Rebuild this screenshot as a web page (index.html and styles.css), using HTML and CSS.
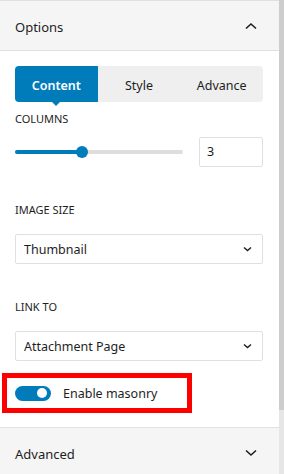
FILE: index.html
```html
<!DOCTYPE html>
<html lang="en">
<head>
    <meta charset="UTF-8">
    <meta name="viewport" content="width=device-width, initial-scale=1.0">
    <title>Gallery Options</title>
    <link rel="stylesheet" href="styles.css">
</head>
<body>
    <div class="panel">
        <!-- Options Section -->
        <div class="section-head">
            <span>Options</span>
            <svg class="chevron" width="12" height="8" viewBox="0 0 12 8"><path d="M1 6.5 L6 2 L11 6.5" fill="none" stroke="#1e1e1e" stroke-width="1.6"/></svg>
        </div>

        <div class="section-body">
            <div class="tabs">
                <div class="tab active">Content</div>
                <div class="tab">Style</div>
                <div class="tab">Advance</div>
            </div>

            <label class="field-label first">Columns</label>
            <div class="range-row">
                <div class="range">
                    <div class="range-fill" style="width: 67px;"></div>
                    <div class="range-thumb" style="left: 67px;"></div>
                </div>
                <div class="number-input">3</div>
            </div>

            <label class="field-label">Image Size</label>
            <div class="select">
                <span>Thumbnail</span>
                <svg width="9" height="6" viewBox="0 0 9 6"><path d="M1 1.5 L4.5 4.5 L8 1.5" fill="none" stroke="#1e1e1e" stroke-width="1.4"/></svg>
            </div>

            <label class="field-label">Link To</label>
            <div class="select">
                <span>Attachment Page</span>
                <svg width="9" height="6" viewBox="0 0 9 6"><path d="M1 1.5 L4.5 4.5 L8 1.5" fill="none" stroke="#1e1e1e" stroke-width="1.4"/></svg>
            </div>

            <div class="toggle-row">
                <div class="toggle"><div class="toggle-knob"></div></div>
                <span>Enable masonry</span>
            </div>
        </div>

        <!-- Advanced Section -->
        <div class="section-head">
            <span>Advanced</span>
            <svg class="chevron" width="12" height="8" viewBox="0 0 12 8"><path d="M1 1.5 L6 6 L11 1.5" fill="none" stroke="#1e1e1e" stroke-width="1.6"/></svg>
        </div>
    </div>
    <div class="scrollbar"><div class="scroll-thumb"></div></div>
</body>
</html>
```

FILE: styles.css
```css
/* General Styles */
body {
    margin: 0;
    display: flex;
    align-items: flex-start;
    height: 474px;
    overflow: hidden;
    background-color: #fff;
    font-family: "Noto Sans", Arial, sans-serif;
    font-size: 12.5px;
    color: #1e1e1e;
}

.panel {
    flex: 0 0 279px;
}

/* Scrollbar strip on the right */
.scrollbar {
    flex: 1;
    align-self: stretch;
    background-color: #e6e6e6;
}

.scroll-thumb {
    height: 410px;
    background-color: #cdcdcd;
}

/* Section Headers */
.section-head {
    height: 49px;
    display: flex;
    align-items: center;
    justify-content: space-between;
    padding: 0 22px 0 15px;
    background-color: #f5f5f5;
    border-top: 1px solid #e0e0e0;
    border-bottom: 1px solid #e0e0e0;
}

.section-head span {
    font-size: 13px;
    padding-top: 2px;
}

.section-body {
    padding: 15px 16px 14px 15px;
}

/* Tabs */
.tabs {
    display: flex;
    height: 36px;
    background-color: #efefef;
    border-radius: 4px;
}

.tab {
    flex: 1;
    display: flex;
    align-items: center;
    justify-content: center;
    position: relative;
    padding-top: 2px;
}

.tab.active {
    background-color: #007cba;
    color: #fff;
    font-weight: 600;
    border-radius: 4px 0 0 4px;
}

.tab.active::after {
    content: "";
    position: absolute;
    bottom: -4px;
    left: 50%;
    margin-left: -4px;
    border-left: 4px solid transparent;
    border-right: 4px solid transparent;
    border-top: 4px solid #007cba;
}

/* Field Labels */
.field-label {
    display: block;
    font-size: 11px;
    line-height: 16px;
    text-transform: uppercase;
    margin: 35px 0 16px;
}

.field-label.first {
    margin: 9px 0 10px;
}

/* Range Control */
.range-row {
    display: flex;
    align-items: center;
    height: 30px;
}

.range {
    position: relative;
    width: 168px;
    height: 4px;
    background-color: #ddd;
    border-radius: 2px;
}

.range-fill {
    height: 4px;
    background-color: #007cba;
    border-radius: 2px;
}

.range-thumb {
    position: absolute;
    top: -4px;
    width: 12px;
    height: 12px;
    margin-left: -6px;
    border-radius: 50%;
    background-color: #007cba;
}

.number-input {
    margin-left: auto;
    width: 55px;
    height: 28px;
    line-height: 28px;
    padding-left: 7px;
    border: 1px solid #e0e0e0;
    border-radius: 2px;
}

/* Select Boxes */
.select {
    display: flex;
    align-items: center;
    justify-content: space-between;
    height: 28px;
    padding: 0 10px 0 8px;
    border: 1px solid #e0e0e0;
    border-radius: 2px;
}

/* Toggle */
.toggle-row {
    display: flex;
    align-items: center;
    width: 172px;
    height: 30px;
    margin: 12px 0 0 -13px;
    padding-left: 8px;
    border: 5px solid #ff0000;
}

.toggle {
    width: 36px;
    height: 15px;
    border-radius: 8px;
    background-color: #007cba;
    display: flex;
    align-items: center;
    justify-content: flex-end;
    padding-right: 4px;
    box-sizing: border-box;
    margin-right: 12px;
}

.toggle-knob {
    width: 10px;
    height: 10px;
    border-radius: 50%;
    background-color: #fff;
}
```
